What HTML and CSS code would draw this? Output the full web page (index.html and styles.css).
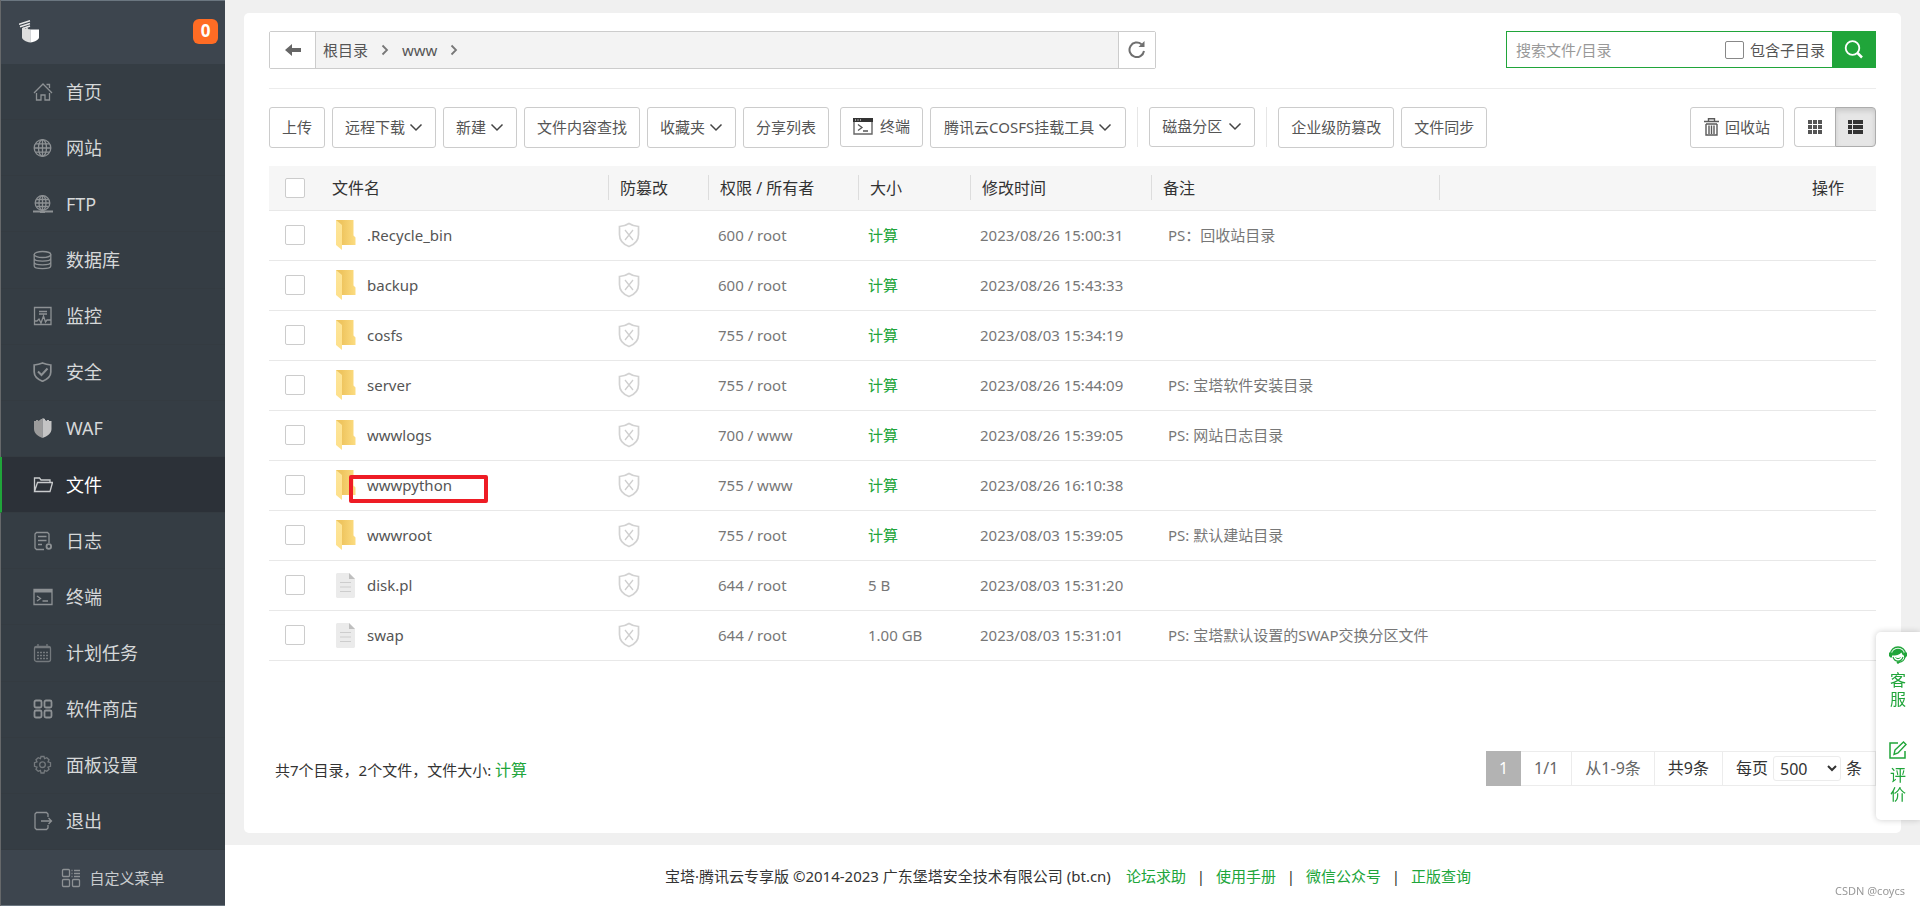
FILE: index.html
```html
<!DOCTYPE html>
<html lang="zh-CN">
<head>
<meta charset="utf-8">
<title>文件 - 宝塔面板</title>
<link rel="stylesheet" href="styles.css">
</head>
<body>
<svg class="sprite" aria-hidden="true">
  <defs>
    <linearGradient id="folder-back" x1="0" x2="1" y1="0" y2="0"><stop offset="0.3" stop-color="#efc55f"/><stop offset="1" stop-color="#fcdc80"/></linearGradient>
    <linearGradient id="folder-flap" x1="0" x2="0" y1="0" y2="1"><stop offset="0" stop-color="#fde59a"/><stop offset="1" stop-color="#fee08a"/></linearGradient>
  </defs>
  <symbol id="folder" viewBox="0 0 20 30">
    <path d="M0 0h17.500v15.500l2 2V25H0z" fill="url(#folder-back)"/>
    <path d="M0 0l6 5v25l-6-5z" fill="url(#folder-flap)"/>
  </symbol>
  <symbol id="file" viewBox="0 0 19 25">
    <path d="M1 0h12l6 6v18l-1 1H1l-1-1V1z" fill="#ebebeb"/>
    <path d="M13 0l6 6h-6z" fill="#bfbfbf"/>
    <path d="M4 9.500h11M4 14h11M4 18.500h11" stroke="#cdcdcd" stroke-width="1" fill="none"/>
  </symbol>
  <symbol id="shield" viewBox="0 0 22 26">
    <path d="M11 1.500c3 2 6 2.800 9.500 3v8c0 5.500-4 10-9.500 12C5.500 22.500 1.500 18 1.500 12.500v-8C5 4.300 8 3.500 11 1.500z" fill="none" stroke="#d2d2d2" stroke-width="1.700"/>
    <path d="M7 8l8 10M15 8L7 18" fill="none" stroke="#cfcfcf" stroke-width="1.300"/>
  </symbol>
  <symbol id="chevron" viewBox="0 0 14 14">
    <path d="M1.500 4.500L7 10l5.500-5.500" fill="none" stroke="#444" stroke-width="1.500"/>
  </symbol>
  <symbol id="crumb" viewBox="0 0 8 12">
    <path d="M1.500 1.500L6 6l-4.500 4.500" fill="none" stroke="#777" stroke-width="1.800"/>
  </symbol>
</svg>

<div class="app">
  <aside class="sidebar">
    <header class="brand">
      <svg class="brand-logo" viewBox="0 0 20 23" aria-hidden="true">
        <path d="M0 4.200L11 .8M1 6.800L11 3.500M4 8.500L11 6" stroke="#e8e8e8" stroke-width="1.500" fill="none"/>
        <path d="M3 8l2-.5L6.500 9 8 7.500l1.500 1.700H11.300V22.500C7 22 3 19.500 3 17.500z" fill="#dedede"/>
        <path d="M11.300 9.500H20v8c0 2-4 4.500-8.700 5z" fill="#fff"/>
      </svg>
      <span class="badge">0</span>
    </header>
    <nav class="menu">
      <a href="#" class="menu-item"><svg class="menu-icon" viewBox="0 0 20 20"><path d="M1 11l9-9 9 9M3.500 11v7H8v-5h4v5h4.500v-7M13.500 2.500h3V6"/></svg>首页</a>
      <a href="#" class="menu-item"><svg class="menu-icon" viewBox="0 0 20 20"><circle cx="9.500" cy="10" r="8.300"/><ellipse cx="9.500" cy="10" rx="4" ry="8.300"/><path d="M9.500 2v16M1 10h17M2.500 5.800h14M2.500 14.200h14"/></svg>网站</a>
      <a href="#" class="menu-item"><svg class="menu-icon" viewBox="0 0 20 20"><circle cx="9.500" cy="9" r="7.300"/><ellipse cx="9.500" cy="9" rx="3.500" ry="7.300"/><path d="M9.500 2v14M2 9h15M3.500 5.500h12M3.500 12.500h12"/><path d="M0 17.500h20M7 18h5" stroke-width="2.200"/></svg>FTP</a>
      <a href="#" class="menu-item"><svg class="menu-icon" viewBox="0 0 20 20"><ellipse cx="9.500" cy="4.500" rx="8.300" ry="3"/><path d="M1.200 4.500v11.500c0 3.500 16.600 3.500 16.600 0V4.500M1.200 8.500c0 3.500 16.600 3.500 16.600 0M1.200 12.200c0 3.500 16.600 3.500 16.600 0"/></svg>数据库</a>
      <a href="#" class="menu-item"><svg class="menu-icon" viewBox="0 0 20 20"><path d="M1.500 1.500h16.500v17H1.500zM6 5.500h8M6 8h8M1.500 15H4l2-2 2 4 2.500-7 2 6 1.500-2H18"/></svg>监控</a>
      <a href="#" class="menu-item"><svg class="menu-icon" viewBox="0 0 20 20"><path d="M9.500 1c3 1.200 5.500 1.700 8.300 2v7c0 4.500-4 7.500-8.300 9.300C5.200 17.500 1.200 14.500 1.200 10V3c2.800-.3 5.300-.8 8.300-2z" stroke-width="1.700"/><path d="M5 9.500l3.500 3.500 6-6.500" stroke-width="2"/></svg>安全</a>
      <a href="#" class="menu-item"><svg class="menu-icon" viewBox="0 0 20 20"><path class="solid-dim" d="M1 3h2V2h2v1l2-1 1-1h1.500v19C5 18.500 1 15 1 11z"/><path class="solid" d="M9.500 0L12 1v1l2 1V2h2v1h2.500v8c0 4-4 7.500-9 9z"/></svg>WAF</a>
      <a href="#" class="menu-item is-active" aria-current="page"><svg class="menu-icon" viewBox="0 0 20 20"><path d="M1.500 16V3h5l1.500 2h9v2.500M1.500 16.500L4.500 7.500h15l-2.500 9z"/></svg>文件</a>
      <a href="#" class="menu-item"><svg class="menu-icon" viewBox="0 0 20 20"><path d="M11 18.500H3.500L2 17V3l1.500-1.500h11L16 3v9M5 5.500h8.500M5 9.500h8.500M5 13.500h4"/><circle cx="15.800" cy="15.500" r="2.300" stroke-width="1.800"/></svg>日志</a>
      <a href="#" class="menu-item"><svg class="menu-icon" viewBox="0 0 20 20"><path d="M1 2.500h18v15H1zM4 9l3.500 2.500L4 14M9.500 14H15"/><path d="M1 4h18" stroke-width="3"/></svg>终端</a>
      <a href="#" class="menu-item"><svg class="menu-icon dim" viewBox="0 0 20 20"><rect x="1.500" y="3.500" width="16" height="15" rx="2"/><path d="M1.500 4.500h16M5 1v4M14 1v4"/><path d="M4 9.500h11M4 12.500h11M4 15.500h11" stroke-dasharray="2 1"/></svg>计划任务</a>
      <a href="#" class="menu-item"><svg class="menu-icon" viewBox="0 0 20 20"><g stroke-width="1.800"><rect x="1.500" y="1.500" width="7" height="7" rx="1.500"/><rect x="11.500" y="1.500" width="7" height="7" rx="1.500"/><rect x="1.500" y="11.500" width="7" height="7" rx="1.500"/><rect x="11.500" y="11.500" width="7" height="7" rx="1.500"/></g></svg>软件商店</a>
      <a href="#" class="menu-item"><svg class="menu-icon dim" viewBox="0 0 20 20"><path d="M8 1.500h3l.6 2.200 2.200-1 2.200 2-1 2.200 2.500.8v3.600l-2.500.8 1 2.200-2.200 2-2.200-1-.6 2.700H8l-.6-2.700-2.200 1-2.200-2 1-2.200-2.500-.8V7.700L4 6.900l-1-2.200 2.200-2 2.200 1z"/><circle cx="9.500" cy="9.700" r="2.800"/></svg>面板设置</a>
      <a href="#" class="menu-item"><svg class="menu-icon" viewBox="0 0 20 20"><path d="M15 6V3l-1.500-1.500H3.500L2 3v14l1.500 1.500h10L15 17v-3M8 10h10.500M15.500 7l3 3-3 3"/></svg>退出</a>
    </nav>
    <a href="#" class="custom-menu"><svg class="menu-icon" viewBox="0 0 20 20"><rect x="1.500" y="1.500" width="7" height="7" rx="1"/><rect x="1.500" y="11.500" width="7" height="7" rx="1"/><rect x="11.500" y="11.500" width="7" height="7" rx="1"/><path d="M10.500 2.500h1M13 2.500h6M10.500 5.500h1M13 5.500h6M10.500 8.500h1M13 8.500h6"/></svg>自定义菜单</a>
  </aside>

  <div class="main">
    <main class="card">
      <div class="path-row">
        <div class="path-bar">
          <button type="button" class="path-back" aria-label="返回上级"><svg width="16" height="12" viewBox="0 0 16 12"><path d="M0 6l7-6v4h9v4H7v4z" fill="#666"/></svg></button>
          <div class="crumbs">
            <a href="#">根目录</a><svg class="crumb-sep"><use href="#crumb"/></svg>
            <a href="#">www</a><svg class="crumb-sep"><use href="#crumb"/></svg>
          </div>
          <button type="button" class="path-refresh" aria-label="刷新"><svg width="18" height="20" viewBox="0 0 18 20"><path d="M13.500 4.200A7.300 7.300 0 1 0 16 11" fill="none" stroke="#6f6f6f" stroke-width="2"/><path d="M16.500 1v6h-6z" fill="#6f6f6f"/></svg></button>
        </div>
        <form class="search">
          <input type="text" class="search-input" placeholder="搜索文件/目录" aria-label="搜索文件/目录">
          <label class="search-sub"><input type="checkbox" class="box box-dark">包含子目录</label>
          <button type="button" class="search-btn" aria-label="搜索"><svg width="20" height="20" viewBox="0 0 20 20"><circle cx="8.500" cy="8" r="6.800" fill="none" stroke="#fff" stroke-width="1.800"/><path d="M13.500 13l4.500 4.500" stroke="#fff" stroke-width="2.500"/></svg></button>
        </form>
      </div>

      <div class="toolbar">
        <button type="button" class="btn">上传</button>
        <button type="button" class="btn">远程下载<svg class="chev"><use href="#chevron"/></svg></button>
        <button type="button" class="btn">新建<svg class="chev"><use href="#chevron"/></svg></button>
        <button type="button" class="btn">文件内容查找</button>
        <button type="button" class="btn">收藏夹<svg class="chev"><use href="#chevron"/></svg></button>
        <button type="button" class="btn">分享列表</button>
        <button type="button" class="btn btn-terminal"><svg width="20" height="17" viewBox="0 0 20 17"><path d="M1 1h18v15H1z" fill="#fff" stroke="#666" stroke-width="1.400"/><path d="M0 0h20v4H0z" fill="#333"/><path d="M2 2h1M4.500 2h1M7 2h1" stroke="#fff"/><path d="M5 6.500l4 3-4 3M10 13h5" fill="none" stroke="#555" stroke-width="1.300"/></svg>终端</button>
        <button type="button" class="btn btn-cosfs">腾讯云COSFS挂载工具<svg class="chev"><use href="#chevron"/></svg></button>
        <span class="rule"></span>
        <button type="button" class="btn btn-disk">磁盘分区<svg class="chev"><use href="#chevron"/></svg></button>
        <span class="rule"></span>
        <button type="button" class="btn">企业级防篡改</button>
        <button type="button" class="btn">文件同步</button>
        <div class="toolbar-end">
          <button type="button" class="btn btn-bin"><svg width="15" height="18" viewBox="0 0 15 18"><path d="M0 3.500h15M4.500 3V.8h6V3M2 6v11h11V6M2 6h11M5 7.500V16M7.500 7.500V16M10 7.500V16" fill="none" stroke="#5a5a5a" stroke-width="1.400"/></svg>回收站</button>
          <div class="view-toggle">
            <button type="button" class="view-btn" aria-label="图标视图"><svg width="14" height="14" viewBox="0 0 14 14"><path d="M0 0h4v4H0zM5 0h4v4H5zM10 0h4v4h-4zM0 5h4v4H0zM5 5h4v4H5zM10 5h4v4h-4zM0 10h4v4H0zM5 10h4v4H5zM10 10h4v4h-4z" fill="#555"/></svg></button>
            <button type="button" class="view-btn is-on" aria-label="列表视图"><svg width="15" height="14" viewBox="0 0 15 14"><path d="M0 0h4v4H0zM5 0h10v4H5zM0 5h4v4H0zM5 5h10v4H5zM0 10h4v4H0zM5 10h10v4H5z" fill="#333"/></svg></button>
          </div>
        </div>
      </div>

      <table class="files">
        <colgroup><col class="c-check"><col class="c-name"><col class="c-guard"><col class="c-perm"><col class="c-size"><col class="c-time"><col class="c-note"><col></colgroup>
        <thead>
          <tr>
            <th class="check"><input type="checkbox" class="box" aria-label="全选"></th>
            <th>文件名</th><th class="split">防篡改</th><th class="split">权限 / 所有者</th><th class="split">大小</th><th class="split">修改时间</th><th class="split">备注</th><th class="split ops">操作</th>
          </tr>
        </thead>
        <tbody>
          <tr><td class="check"><input type="checkbox" class="box" aria-label=".Recycle_bin"></td><td><div class="name"><svg class="ico-folder"><use href="#folder"/></svg>.Recycle_bin</div></td><td><svg class="ico-shield"><use href="#shield"/></svg></td><td>600 / root</td><td><a href="#">计算</a></td><td>2023/08/26 15:00:31</td><td class="note">PS：回收站目录</td><td></td></tr>
          <tr><td class="check"><input type="checkbox" class="box" aria-label="backup"></td><td><div class="name"><svg class="ico-folder"><use href="#folder"/></svg>backup</div></td><td><svg class="ico-shield"><use href="#shield"/></svg></td><td>600 / root</td><td><a href="#">计算</a></td><td>2023/08/26 15:43:33</td><td class="note"></td><td></td></tr>
          <tr><td class="check"><input type="checkbox" class="box" aria-label="cosfs"></td><td><div class="name"><svg class="ico-folder"><use href="#folder"/></svg>cosfs</div></td><td><svg class="ico-shield"><use href="#shield"/></svg></td><td>755 / root</td><td><a href="#">计算</a></td><td>2023/08/03 15:34:19</td><td class="note"></td><td></td></tr>
          <tr><td class="check"><input type="checkbox" class="box" aria-label="server"></td><td><div class="name"><svg class="ico-folder"><use href="#folder"/></svg>server</div></td><td><svg class="ico-shield"><use href="#shield"/></svg></td><td>755 / root</td><td><a href="#">计算</a></td><td>2023/08/26 15:44:09</td><td class="note">PS: 宝塔软件安装目录</td><td></td></tr>
          <tr><td class="check"><input type="checkbox" class="box" aria-label="wwwlogs"></td><td><div class="name"><svg class="ico-folder"><use href="#folder"/></svg>wwwlogs</div></td><td><svg class="ico-shield"><use href="#shield"/></svg></td><td>700 / www</td><td><a href="#">计算</a></td><td>2023/08/26 15:39:05</td><td class="note">PS: 网站日志目录</td><td></td></tr>
          <tr><td class="check"><input type="checkbox" class="box" aria-label="wwwpython"></td><td><div class="name"><svg class="ico-folder"><use href="#folder"/></svg>wwwpython<span class="marker"></span></div></td><td><svg class="ico-shield"><use href="#shield"/></svg></td><td>755 / www</td><td><a href="#">计算</a></td><td>2023/08/26 16:10:38</td><td class="note"></td><td></td></tr>
          <tr><td class="check"><input type="checkbox" class="box" aria-label="wwwroot"></td><td><div class="name"><svg class="ico-folder"><use href="#folder"/></svg>wwwroot</div></td><td><svg class="ico-shield"><use href="#shield"/></svg></td><td>755 / root</td><td><a href="#">计算</a></td><td>2023/08/03 15:39:05</td><td class="note">PS: 默认建站目录</td><td></td></tr>
          <tr><td class="check"><input type="checkbox" class="box" aria-label="disk.pl"></td><td><div class="name"><svg class="ico-file"><use href="#file"/></svg>disk.pl</div></td><td><svg class="ico-shield"><use href="#shield"/></svg></td><td>644 / root</td><td>5 B</td><td>2023/08/03 15:31:20</td><td class="note"></td><td></td></tr>
          <tr><td class="check"><input type="checkbox" class="box" aria-label="swap"></td><td><div class="name"><svg class="ico-file"><use href="#file"/></svg>swap</div></td><td><svg class="ico-shield"><use href="#shield"/></svg></td><td>644 / root</td><td>1.00 GB</td><td>2023/08/03 15:31:01</td><td class="note">PS: 宝塔默认设置的SWAP交换分区文件</td><td></td></tr>
        </tbody>
      </table>

      <div class="summary-row">
        <p class="summary">共7个目录，2个文件，文件大小: <a href="#">计算</a></p>
        <div class="pager">
          <span class="page-current">1</span>
          <span>1/1</span>
          <span>从1-9条</span>
          <span class="dark">共9条</span>
          <label class="dark page-size">每页<select><option>500</option></select>条</label>
        </div>
      </div>
    </main>

    <footer class="footer">
      <span class="copyright">宝塔·腾讯云专享版 ©2014-2023 广东堡塔安全技术有限公司 (bt.cn)</span>
      <a href="#">论坛求助</a><span class="bar">|</span>
      <a href="#">使用手册</a><span class="bar">|</span>
      <a href="#">微信公众号</a><span class="bar">|</span>
      <a href="#">正版查询</a>
    </footer>
  </div>
</div>

<aside class="float-box">
  <a href="#" class="float-item"><svg width="18" height="18" viewBox="0 0 18 18"><path d="M1.500 8a7.500 7 0 0 1 15 0" fill="none" stroke="#20a53a" stroke-width="1.300"/><path d="M3 9.500C2.500 5 5.500 2.800 9 2.800s6.500 2.200 6 6.700C13.500 9.500 13 8 12.500 6.500 10.500 9 7 9.500 3 9.500z" fill="#20a53a"/><path d="M0 6.500h3v5H1.500L0 10zM15 6.500h3V10l-1.500 1.500H15z" fill="#20a53a"/><path d="M4 11c1 3 3 4.200 5 4.200S13 14 14 11M16 11c-.5 3-3 5-6 5.300" fill="none" stroke="#20a53a" stroke-width="1.200"/><path d="M6.500 11.500c1.500 1.500 3.500 1.500 5 0" fill="none" stroke="#20a53a"/><circle cx="9" cy="16.500" r="1.300" fill="#20a53a"/></svg><span>客服</span></a>
  <a href="#" class="float-item"><svg width="18" height="18" viewBox="0 0 18 18"><path d="M9 2H1v15h15v-7" fill="none" stroke="#20a53a" stroke-width="1.500"/><path d="M6 9l8.500-8 2.500 2.500L9 12l-4 1.500z" fill="none" stroke="#20a53a" stroke-width="1.400"/></svg><span>评价</span></a>
</aside>
<span class="credit">CSDN @coycs</span>
</body>
</html>
```

FILE: styles.css
```css
* { box-sizing: border-box; }

body {
  margin: 0;
  background: #f0f0f0;
  color: #333;
  font: 15px/20px "Noto Sans", "Noto Sans CJK SC", sans-serif;
}

a { color: #20a53a; text-decoration: none; }
button, input, select { font: inherit; color: inherit; }
button { cursor: pointer; }
svg { display: block; flex: none; }
.sprite { position: absolute; width: 0; height: 0; }

.app { display: flex; min-height: 100vh; }

/* Sidebar */
.sidebar {
  display: flex;
  flex-direction: column;
  flex: none;
  width: 225px;
  background: #353d44;
  border-left: 1px solid #66686a;
}
.brand {
  display: flex;
  justify-content: space-between;
  align-items: center;
  height: 64px;
  padding: 0 7px 2px 18px;
  background: #3d454e;
  border-top: 1px solid #6b7680;
}
.brand-logo { width: 20px; height: 23px; }
.badge {
  width: 25px;
  height: 25px;
  border-radius: 6px;
  background: #ff6c24;
  color: #fff;
  font-size: 17px;
  font-weight: 700;
  line-height: 24px;
  text-align: center;
}
.menu { display: flex; flex-direction: column; flex: 1; }
.menu-item {
  display: flex;
  flex: 1;
  align-items: center;
  gap: 13px;
  min-height: 40px;
  padding-left: 32px;
  color: #d6d8d9;
  font-size: 18px;
  border-bottom: 1px solid #343b41;
}
.menu-item.is-active {
  margin-left: -1px;
  padding-left: 31px;
  background: #2c3138;
  border-left: 2px solid #20a53a;
  color: #fff;
}
.menu-icon {
  width: 20px;
  height: 20px;
  fill: none;
  stroke: #8d9194;
  stroke-width: 1.3;
}
.menu-icon.dim { stroke: #74797d; }
.is-active .menu-icon { stroke: #c9cbcd; }
.menu-icon .solid { fill: #c4c4c4; stroke: none; }
.menu-icon .solid-dim { fill: #9b9b9b; stroke: none; }
.custom-menu {
  display: flex;
  justify-content: center;
  align-items: center;
  gap: 8px;
  height: 56px;
  background: #3d454e;
  border-bottom: 1px solid #6b7680;
  color: #c9cccf;
}

/* Content card */
.main { display: flex; flex-direction: column; flex: 1; min-width: 0; }
.card {
  flex: 1;
  margin: 13px 19px 12px;
  padding: 18px 25px 40px;
  background: #fff;
  border-radius: 5px;
}
.path-row {
  display: flex;
  justify-content: space-between;
  padding-bottom: 19px;
  border-bottom: 1px solid #ececec;
}
.path-bar {
  display: flex;
  width: 55.2%;
  height: 38px;
  border: 1px solid #ccc;
  border-radius: 2px;
  background: #f3f3f3;
}
.path-back, .path-refresh {
  display: flex;
  align-items: center;
  justify-content: center;
  padding: 0;
  border: 0;
  background: #fff;
}
.path-back { width: 46px; border-right: 1px solid #ccc; }
.path-refresh { width: 37px; border-left: 1px solid #ccc; }
.crumbs { display: flex; flex: 1; align-items: center; padding-left: 7px; }
.crumbs a { color: #555; }
.crumb-sep { width: 8px; height: 12px; margin: 0 13px; }

.search { display: flex; width: 370px; height: 37px; border: 1px solid #20a53a; }
.search-input {
  flex: 1;
  min-width: 0;
  padding: 0 9px;
  border: 0;
  background: none;
  outline: 0;
}
.search-input::placeholder { color: #999; opacity: 1; }
.search-sub { display: flex; align-items: center; gap: 6px; padding-right: 7px; color: #555; }
.search-btn {
  display: flex;
  align-items: center;
  justify-content: center;
  width: 43px;
  border: 0;
  background: #20a53a;
}
.box {
  appearance: none;
  display: block;
  width: 20px;
  height: 20px;
  margin: 0;
  border: 1px solid #ccc;
  border-radius: 2px;
  background: #fff;
}
.box-dark { width: 19px; height: 18px; border-color: #888; }

/* Toolbar */
.toolbar { display: flex; align-items: flex-start; gap: 7px; margin: 18px 0; }
.btn {
  display: flex;
  align-items: center;
  gap: 4px;
  height: 41px;
  padding: 0 12px 2px;
  border: 1px solid #ccc;
  border-radius: 3px;
  background: #fff;
  color: #555;
  white-space: nowrap;
}
.chev { width: 14px; height: 14px; }
.btn-terminal { gap: 7px; height: 40px; margin-left: 4px; }
.btn-cosfs, .btn-bin { padding: 0 13px 2px; }
.btn-disk { gap: 6px; height: 40px; }
.btn-bin { gap: 6px; }
.rule { width: 1px; height: 40px; margin: 0 4px; background: #e6e6e6; }
.toolbar-end { display: flex; gap: 10px; margin-left: auto; }
.view-toggle { display: flex; height: 40px; }
.view-btn {
  display: flex;
  align-items: center;
  justify-content: center;
  width: 41px;
  padding: 0;
  border: 1px solid #ccc;
  border-right: 0;
  border-radius: 4px 0 0 4px;
  background: #fff;
}
.view-btn.is-on {
  border: 1px solid #adadad;
  border-radius: 0 4px 4px 0;
  background: #e6e6e6;
  box-shadow: inset 0 3px 5px rgba(0, 0, 0, .125);
}

/* File table */
.files { width: 100%; table-layout: fixed; border-collapse: collapse; }
.c-check { width: 51px; }
.c-name { width: 288px; }
.c-guard { width: 100px; }
.c-perm { width: 150px; }
.c-size { width: 112px; }
.c-time { width: 181px; }
.c-note { width: 288px; }
.files th {
  height: 44px;
  padding: 0 12px;
  border-bottom: 1px solid #e8e8e8;
  background: #f6f6f6;
  font-size: 16px;
  font-weight: 400;
  text-align: left;
  white-space: nowrap;
}
.files th.split {
  background: linear-gradient(#ddd, #ddd) 0 9px / 1px 25px no-repeat #f6f6f6;
}
.files th.ops { padding-right: 32px; text-align: right; }
.files td {
  height: 50px;
  padding: 0 10px;
  border-bottom: 1px solid #e8e8e8;
  color: #777;
  white-space: nowrap;
}
.files .check { padding: 0 0 0 16px; }
.files .note { padding: 0 0 0 17px; }
.name { position: relative; display: flex; align-items: center; padding-left: 6px; color: #555; }
.ico-folder { width: 20px; height: 30px; margin-right: 11px; }
.ico-file { width: 19px; height: 25px; margin-right: 12px; }
.ico-shield { width: 22px; height: 26px; }
.marker {
  position: absolute;
  top: 5px;
  left: 19px;
  width: 139px;
  height: 28px;
  border: 4px solid #ee1c25;
  border-radius: 2px;
}

/* Summary and pager */
.summary-row {
  display: flex;
  justify-content: space-between;
  align-items: center;
  margin-top: 90px;
}
.summary { margin: 0; padding: 4px 0 0 6px; }
.summary a { font-size: 16px; }
.pager { display: flex; height: 35px; font-size: 16px; color: #666; }
.pager > * {
  display: flex;
  align-items: center;
  padding: 0 13px;
  border: 1px solid #ececec;
  border-left: 0;
}
.pager .page-current { border: 0; background: #b3b3b3; color: #fff; }
.pager .dark { color: #333; }
.pager .page-size { gap: 5px; }
.page-size select {
  width: 68px;
  height: 25px;
  padding: 0 2px;
  border: 1px solid #ececec;
  border-radius: 3px;
  background: #fff;
}

/* Footer */
.footer {
  display: flex;
  justify-content: center;
  align-items: center;
  height: 61px;
  padding-right: 9px;
  background: #fff;
}
.copyright { margin-right: 15px; }
.bar { width: 30px; text-align: center; }

/* Floating service box */
.float-box {
  position: fixed;
  right: 0;
  bottom: 86px;
  display: flex;
  flex-direction: column;
  gap: 32px;
  width: 44px;
  padding: 14px 0 16px;
  border-radius: 5px 0 0 5px;
  background: #fff;
  box-shadow: 0 0 6px rgba(0, 0, 0, .2);
}
.float-item {
  display: flex;
  flex-direction: column;
  align-items: center;
  gap: 7px;
  font-size: 16px;
  line-height: 19px;
}
.float-item span { width: 16px; word-break: break-all; }
.credit {
  position: fixed;
  right: 15px;
  bottom: 5px;
  color: #999;
  font-size: 11px;
}
```
